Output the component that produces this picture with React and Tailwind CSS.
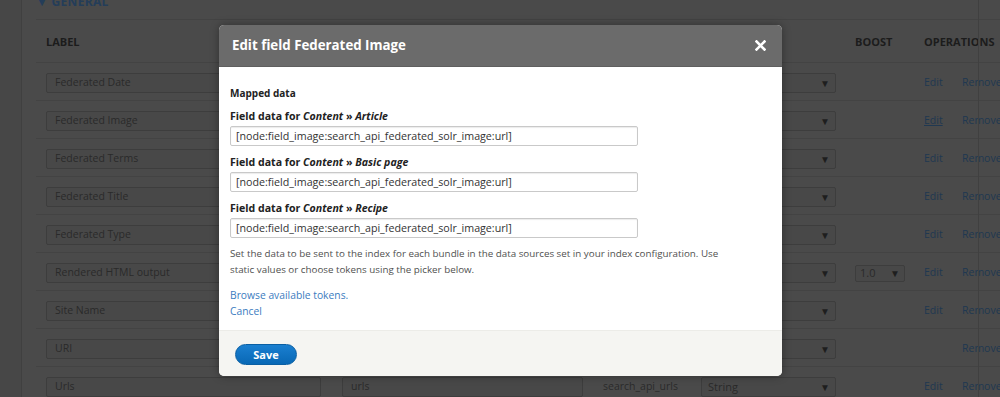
const rows = [
  { label: 'Federated Date', machine: 'federated_date', type: 'search_api_federated_date', edit: true },
  { label: 'Federated Image', machine: 'federated_image', type: 'search_api_federated_image', edit: true, hover: true },
  { label: 'Federated Terms', machine: 'federated_terms', type: 'search_api_federated_terms', edit: true },
  { label: 'Federated Title', machine: 'federated_title', type: 'search_api_federated_title', edit: true },
  { label: 'Federated Type', machine: 'federated_type', type: 'search_api_federated_type', edit: true },
  { label: 'Rendered HTML output', machine: 'rendered_item', type: 'rendered_item', edit: true, boost: '1.0' },
  { label: 'Site Name', machine: 'site_name', type: 'site_name', edit: true },
  { label: 'URI', machine: 'uri', type: 'search_api_url', edit: false },
  { label: 'Urls', machine: 'urls', type: 'search_api_urls', edit: true, select: 'String' },
];

function Caret() {
  return <span className="text-[10px] text-[#1e1e1e] leading-none">▼</span>;
}

function Row({ row }) {
  return (
    <div className="flex items-center h-[38px] pt-[3px] border-b border-[#434343] text-[10.5px] text-[#2a2a2a]">
      <div className="ml-[10px] w-[275px] h-[20px] flex items-center px-[8px] bg-[#484848] border border-[#3d3d3d] rounded-[2px]">
        {row.label}
      </div>
      <div className="ml-[21px] w-[241px] h-[20px] flex items-center px-[8px] bg-[#484848] border border-[#3d3d3d] rounded-[2px]">
        {row.machine}
      </div>
      <div className="ml-[20px] w-[98px] whitespace-nowrap overflow-hidden">{row.type}</div>
      <div className="w-[135px] h-[20px] flex items-center justify-between pl-[6px] pr-[5px] bg-[#484848] border border-[#3d3d3d] rounded-[2px]">
        <span className="text-[11px]">{row.select || ''}</span>
        <Caret />
      </div>
      <div className="ml-[19px] w-[50px]">
        {row.boost && (
          <div className="h-[17px] flex items-center justify-between pl-[4px] pr-[4px] bg-[#484848] border border-[#3d3d3d] rounded-[2px]">
            <span className="text-[11px]">{row.boost}</span>
            <Caret />
          </div>
        )}
      </div>
      <div className="ml-[19px] w-[38px] text-[#203851]">
        {row.edit && <span className={row.hover ? 'underline' : ''}>Edit</span>}
      </div>
      <div className="text-[#203851] whitespace-nowrap">Remove</div>
    </div>
  );
}

function FieldInput() {
  return (
    <div className="mt-[2px] w-[408px] h-[20px] flex items-center px-[5px] bg-white border border-[#c9c9c9] rounded-[2px] shadow-[inset_0_1px_1px_rgba(0,0,0,0.08)] text-[10.7px] text-[#333]">
      [node:field_image:search_api_federated_solr_image:url]
    </div>
  );
}

function FieldLabel({ bundle, first }) {
  return (
    <div className={`${first ? 'mt-[7px]' : 'mt-[8px]'} h-[16px] leading-[16px] text-[10.6px] font-bold text-[#222]`}>
      Field data for <em>Content</em> » <em>{bundle}</em>
    </div>
  );
}

export default function App() {
  return (
    <div className="relative w-[1000px] h-[397px] overflow-hidden bg-[#4a4a4a] flex" style={{ fontFamily: '"Open Sans", sans-serif' }}>
      <div className="w-[22px] shrink-0 bg-[#474747] border-r border-[#404040]" />
      <div className="flex-1 pl-[14px]">
        <div className="-mt-[7px] h-[27px] border-b border-[#434343] text-[12px] font-bold text-[#243d59] tracking-wide">
          ▼ GENERAL
        </div>
        <div className="flex items-center h-[43px] pt-[3px] border-b border-[#434343] text-[11px] font-bold text-[#1c1c1c]">
          <div className="ml-[10px] w-[809px]">LABEL</div>
          <div className="w-[69px]">BOOST</div>
          <div>OPERATIONS</div>
        </div>
        {rows.map((row) => (
          <Row key={row.label} row={row} />
        ))}
      </div>
      <div className="absolute top-0 bottom-0 left-[978px] w-px bg-[#404040]" />

      {/* dialog */}
      <div className="absolute left-[219px] top-[25px] w-[563px] rounded-[5px] bg-white shadow-[0_0_8px_rgba(0,0,0,0.35)] overflow-hidden">
        <div className="h-[42px] bg-[#6b6b6b] border-b border-[#5f5f5f] flex items-center justify-between pl-[13px] pr-[16px]">
          <div className="text-[13.3px] font-bold text-white">Edit field Federated Image</div>
          <svg width="11" height="11" viewBox="0 0 11 11">
            <path d="M1.5 1.5 L9.5 9.5 M9.5 1.5 L1.5 9.5" stroke="#fff" strokeWidth="2.6" strokeLinecap="square" />
          </svg>
        </div>
        <div className="px-[11px] pt-[18px] pb-[11px]">
          <div className="h-[16px] leading-[16px] text-[10px] font-bold text-[#222]">Mapped data</div>
          <FieldLabel bundle="Article" first />
          <FieldInput />
          <FieldLabel bundle="Basic page" />
          <FieldInput />
          <FieldLabel bundle="Recipe" />
          <FieldInput />
          <p className="mt-[8px] w-[500px] text-[9.8px] leading-[16px] text-[#4f4f4f]">
            Set the data to be sent to the index for each bundle in the data sources set in your index configuration. Use static values or choose tokens using the picker below.
          </p>
          <div className="mt-[9px] text-[10.3px] leading-[16px] text-[#3b7cc0]">Browse available tokens.</div>
          <div className="text-[10.3px] leading-[16px] text-[#3b7cc0]">Cancel</div>
        </div>
        <div className="h-[46px] bg-[#f5f5f2] border-t border-[#ecece8] pl-[16px] pt-[10px]">
          <button className="w-[62px] h-[21px] rounded-full bg-gradient-to-b from-[#1a7fd0] to-[#0868b5] border border-[#0a5fa3] text-white text-[11px] font-bold leading-none">
            Save
          </button>
        </div>
      </div>
    </div>
  );
}
